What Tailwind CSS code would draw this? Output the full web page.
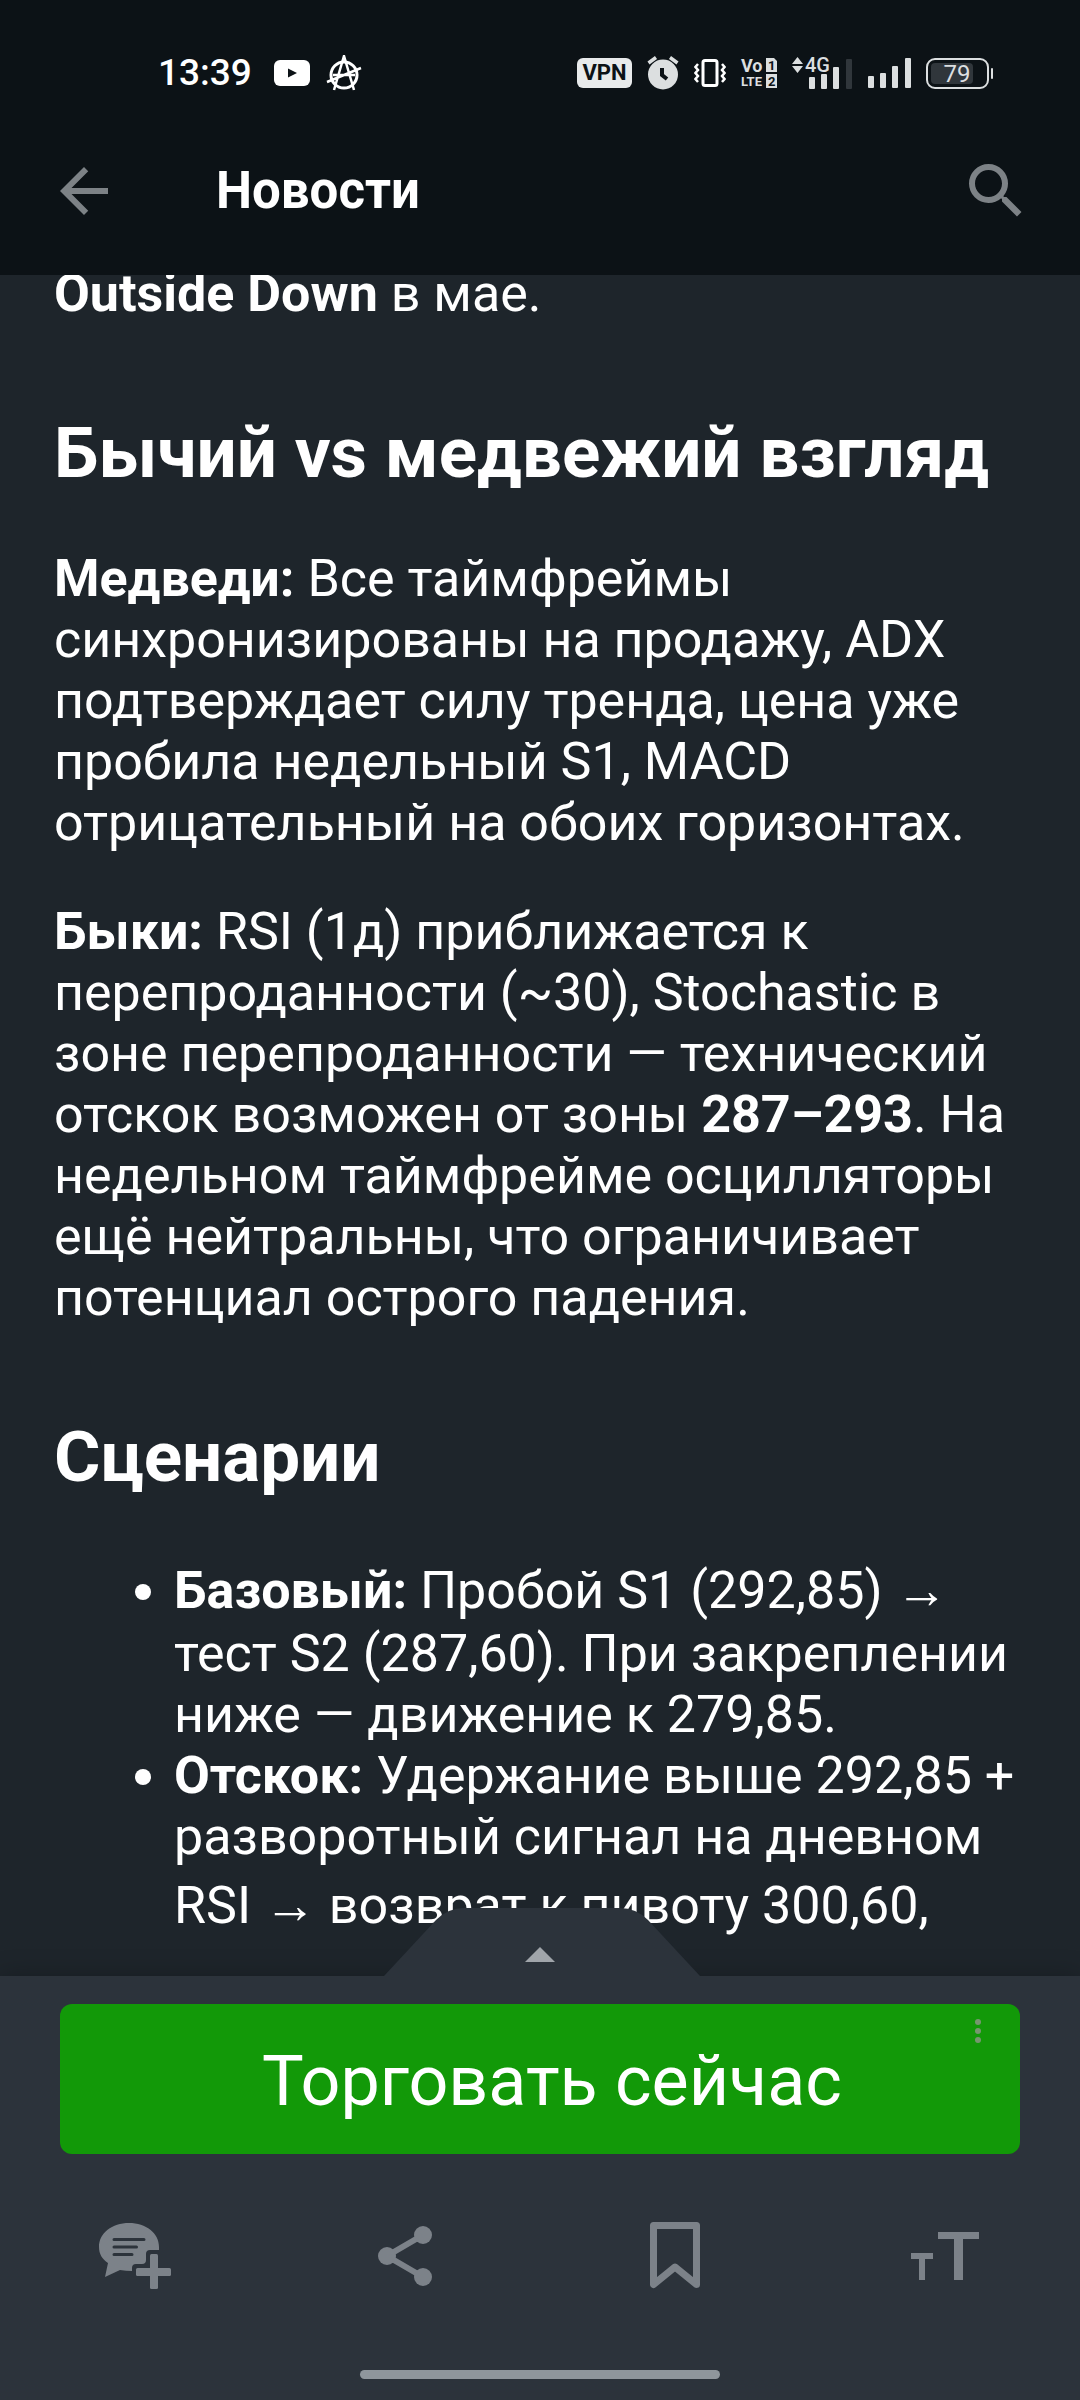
<!DOCTYPE html>
<html lang="ru">
  <head>
    <meta charset="UTF-8" />
    <meta name="viewport" content="width=device-width, initial-scale=1.0" />
    <title>Новости</title>
    <script src="https://cdn.jsdelivr.net/npm/@tailwindcss/browser@4"></script>
  </head>
  <body class="bg-[#1e252b] font-['Roboto','Noto_Sans',sans-serif] text-white">
    <div class="flex h-screen flex-col overflow-hidden">

      <header class="shrink-0 bg-[#0c1216]">
        <!-- status bar -->
        <div class="flex h-[107px] items-center justify-between pt-[38px] pr-[86px] pl-[158px]">
          <div class="flex items-center gap-4">
            <span class="text-[37px] font-medium">13:39</span>
            <div class="flex items-center gap-4 pl-1.5">
              <svg class="h-[26px] w-9" viewBox="0 0 36 26">
                <rect width="36" height="26" rx="6" fill="#fff" />
                <path d="M14 8.500v9l9-4.500z" fill="#0c1216" />
              </svg>
              <svg class="h-9 w-9" viewBox="0 0 36 36" fill="none" stroke="#fff" stroke-width="3">
                <circle cx="18" cy="20" r="13" />
                <path d="M8 35 18 1 28 35M1 27 35 13M7 20h22" stroke-width="2.500" />
              </svg>
            </div>
          </div>
          <div class="flex items-center gap-[15px]">
            <span class="flex h-[30px] w-[55px] items-center justify-center rounded-md bg-[#e8eaeb] text-[22px] font-bold text-[#0c1216]">VPN</span>
            <svg class="h-[34px] w-8" viewBox="0 0 32 34" fill="none">
              <circle cx="16" cy="18.500" r="15" fill="#dcdfe0" />
              <path d="M1.500 7 9 1.500M30.500 7 23 1.500" stroke="#dcdfe0" stroke-width="3.500" />
              <path d="M15 12v7l5 4" stroke="#0c1216" stroke-width="4" />
            </svg>
            <svg class="h-7 w-8" viewBox="0 0 32 28" fill="none" stroke="#fff">
              <rect x="9" y="1.500" width="14" height="25" rx="2" stroke-width="3" />
              <path d="M4 5 1.500 8 4 11 1.500 14 4 17 1.500 20 4 23M28 5l2.500 3L28 11l2.500 3L28 17l2.500 3L28 23" stroke-width="2.500" />
            </svg>
            <svg class="h-[30px] w-9 overflow-visible" viewBox="0 0 36 30" fill="#dcdfe0" font-weight="700">
              <text x="0" y="14" font-size="18">Vo</text>
              <text x="0" y="28" font-size="13">LTE</text>
              <path d="M25 0h8l3 3v11H25zM25 16h11v14H25z" />
              <text x="27" y="12" font-size="13" fill="#0c1216">1</text>
              <text x="27" y="28" font-size="13" fill="#0c1216">2</text>
            </svg>
            <svg class="h-8 w-[61px] overflow-visible" viewBox="0 0 61 32" fill="#dcdfe0">
              <path d="M0 7 5.500 0 11 7zM0 9h11L5.500 16z" />
              <text x="13" y="15" font-size="20" font-weight="500">4G</text>
              <rect x="17" y="20" width="6" height="12" rx="1" />
              <rect x="29" y="17" width="6" height="15" rx="1" />
              <rect x="41" y="10" width="6" height="22" rx="1" />
              <rect x="54" y="2" width="6" height="30" rx="1" fill="#30363b" />
            </svg>
            <svg class="h-[30px] w-[43px]" viewBox="0 0 43 30" fill="#dcdfe0">
              <rect x="0" y="18" width="6" height="12" rx="1" />
              <rect x="12" y="15" width="6" height="15" rx="1" />
              <rect x="24" y="8" width="6" height="22" rx="1" />
              <rect x="37" width="6" height="30" rx="1" />
            </svg>
            <svg class="h-8 w-[68px]" viewBox="0 0 68 32">
              <rect x="1" y="2" width="61" height="29" rx="8" fill="none" stroke="#dcdfe0" stroke-width="2" />
              <rect x="5" y="6" width="42" height="21" rx="4" fill="#30363b" />
              <rect x="65" y="11" width="2" height="11" rx="1" fill="#dcdfe0" />
              <text x="31" y="25" font-size="24" text-anchor="middle" fill="#dcdfe0">79</text>
            </svg>
          </div>
        </div>

        <!-- app bar -->
        <div class="flex h-[168px] items-center px-12">
          <button type="button" aria-label="Назад">
            <svg class="h-[72px] w-[72px] fill-[#7d8286]" viewBox="0 0 24 24"><path d="M20 11H7.830l5.590-5.590L12 4l-8 8 8 8 1.410-1.410L7.830 13H20v-2z" /></svg>
          </button>
          <h1 class="grow pl-24 text-[51px] font-bold">Новости</h1>
          <button type="button" aria-label="Поиск">
            <svg class="h-[72px] w-[72px] fill-[#7d8286]" viewBox="0 0 24 24"><path d="M15.500 14h-.79l-.28-.27A6.471 6.471 0 0 0 16 9.500 6.500 6.500 0 1 0 9.500 16c1.610 0 3.090-.59 4.230-1.570l.27.28v.79l5 4.990L20.490 19l-4.990-5zm-6 0C7.010 14 5 11.990 5 9.500S7.010 5 9.500 5 14 7.010 14 9.500 11.990 14 9.500 14z" /></svg>
          </button>
        </div>
      </header>

      <main class="min-h-0 grow overflow-hidden">
        <article class="-mt-3 px-[54px] text-[52px] leading-[normal]">
          <p><b>Outside Down</b> в мае.</p>
          <h2 class="mt-[87px] text-[71px] font-bold">Бычий vs медвежий взгляд</h2>
          <p class="mt-[54px]"><b>Медведи:</b> Все таймфреймы синхронизированы на продажу, ADX подтверждает силу тренда, цена уже пробила недельный S1, MACD отрицательный на обоих горизонтах.</p>
          <p class="mt-12"><b>Быки:</b> RSI (1д) приближается к перепроданности (~30), Stochastic в зоне перепроданности — технический отскок возможен от зоны <b>287–293</b>. На недельном таймфрейме осцилляторы ещё нейтральны, что ограничивает потенциал острого падения.</p>
          <h2 class="mt-[87px] text-[71px] font-bold">Сценарии</h2>
          <ul class="-mr-3 mt-[54px] list-disc pl-[120px]">
            <li><b>Базовый:</b> Пробой S1 (292,85) <span class="font-['Noto_Sans','Roboto',sans-serif]">→</span> тест S2 (287,60). При закреплении ниже — движение к 279,85.</li>
            <li><b>Отскок:</b> Удержание выше 292,85 + разворотный сигнал на дневном RSI <span class="font-['Noto_Sans','Roboto',sans-serif]">→</span> возврат к пивоту 300,60,</li>
          </ul>
        </article>
      </main>

      <footer class="relative shrink-0 bg-[#2c333b] shadow-[0_0_24px_rgba(0,0,0,0.25)]">
        <button type="button" aria-label="Развернуть" class="absolute bottom-full left-1/2 -translate-x-1/2">
          <svg class="block h-[68px] w-80" viewBox="0 0 320 68">
            <path d="M4 68 56 12Q68 0 84 0H240Q256 0 268 12L320 68z" fill="#2c333b" />
            <path d="M145 54 160 39 175 54z" fill="#a0a5aa" />
          </svg>
        </button>
        <div class="px-[60px] pt-7">
          <div class="relative">
            <button type="button" class="h-[150px] w-full rounded-xl bg-[#129908] pt-1 pl-6 text-[70px]">Торговать сейчас</button>
            <button type="button" aria-label="Меню рекламы" class="absolute top-2 right-7">
              <svg class="h-10 w-7 fill-[#76966f]" viewBox="0 0 28 40"><circle cx="14" cy="10" r="3" /><circle cx="14" cy="19" r="3" /><circle cx="14" cy="28" r="3" /></svg>
            </button>
          </div>
        </div>
        <nav class="grid h-[204px] grid-cols-4 place-items-center">
          <button type="button" aria-label="Комментировать">
            <svg class="h-[72px] w-[72px] fill-[#7c8289]" viewBox="0 0 72 72">
              <path d="M30 3C13 3 0 13 0 27c0 7 3 12 9 16L6 57l15-7q6 1 12 1v-3q0-4 4-4h6q4 0 4-4v-6q0-4 4-4h9v-3C60 13 47 3 30 3z" />
              <path d="M15 19.500h30M15 27h22.500M15 34.500h18" stroke="#2c333b" stroke-width="3" stroke-linecap="round" />
              <rect x="51" y="34" width="8" height="35" rx="1.500" />
              <rect x="37" y="48" width="35" height="8" rx="1.500" />
            </svg>
          </button>
          <button type="button" aria-label="Поделиться">
            <svg class="h-[72px] w-[72px] fill-[#7c8289]" viewBox="0 0 72 72">
              <path d="M54 15 18 36 54 57" fill="none" stroke="#7c8289" stroke-width="6" />
              <circle cx="54" cy="15" r="9" /><circle cx="18" cy="36" r="9" /><circle cx="54" cy="57" r="9" />
            </svg>
          </button>
          <button type="button" aria-label="Сохранить">
            <svg class="h-[72px] w-[72px]" viewBox="0 0 72 72" fill="none" stroke="#7c8289" stroke-width="7" stroke-linejoin="round">
              <path d="M14.500 5.500H57.500V64.500L36 47 14.500 64.500z" />
            </svg>
          </button>
          <button type="button" aria-label="Размер шрифта">
            <svg class="h-[72px] w-[72px] fill-[#7c8289]" viewBox="0 0 72 72">
              <rect x="2" y="33" width="22" height="6" /><rect x="10" y="33" width="6" height="27" />
              <rect x="29" y="12" width="41" height="7" /><rect x="45" y="12" width="9" height="48" />
            </svg>
          </button>
        </nav>
        <div class="flex justify-center pt-3 pb-[21px]">
          <div class="h-[9px] w-1/3 rounded-full bg-[#8f969c]"></div>
        </div>
      </footer>

    </div>
  </body>
</html>
